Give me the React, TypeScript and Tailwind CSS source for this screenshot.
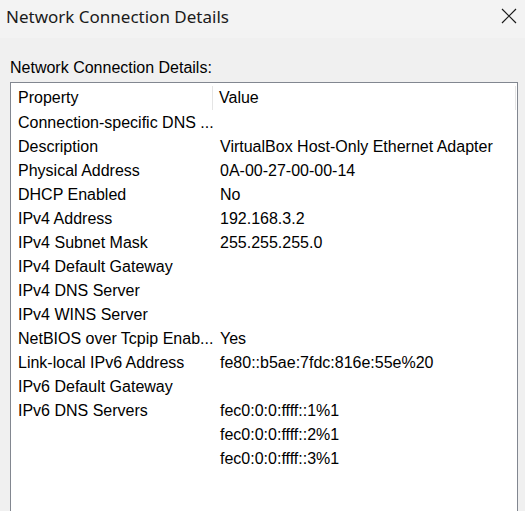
import React from "react";

const rows: [string, string[]][] = [
  ["Connection-specific DNS ...", [""]],
  ["Description", ["VirtualBox Host-Only Ethernet Adapter"]],
  ["Physical Address", ["0A-00-27-00-00-14"]],
  ["DHCP Enabled", ["No"]],
  ["IPv4 Address", ["192.168.3.2"]],
  ["IPv4 Subnet Mask", ["255.255.255.0"]],
  ["IPv4 Default Gateway", [""]],
  ["IPv4 DNS Server", [""]],
  ["IPv4 WINS Server", [""]],
  ["NetBIOS over Tcpip Enab...", ["Yes"]],
  ["Link-local IPv6 Address", ["fe80::b5ae:7fdc:816e:55e%20"]],
  ["IPv6 Default Gateway", [""]],
  ["IPv6 DNS Servers", ["fec0:0:0:ffff::1%1", "fec0:0:0:ffff::2%1", "fec0:0:0:ffff::3%1"]],
];

export default function App() {
  return (
    <div className="w-[525px] h-[511px] overflow-hidden bg-[#f0f0f0] text-black flex flex-col">
      <div className="h-[38px] shrink-0 bg-[#f3f3f3] flex items-center justify-between pl-[6px] pr-[8px]">
        <span className="text-[17px] leading-none font-['Noto_Sans',sans-serif] text-[#1a1a1a] -mt-[5px]">
          Network Connection Details
        </span>
        <svg width="16" height="16" viewBox="0 0 16 16" className="-mt-[6px]">
          <path d="M1 1 L15 15 M15 1 L1 15" stroke="#1a1a1a" strokeWidth="1.2" />
        </svg>
      </div>
      <div className="flex-1 flex flex-col pl-[10px] pr-[7px] font-['Liberation_Sans',Arial,sans-serif] text-[16px]">
        <div className="h-[44px] flex items-end pb-[6px] leading-none">Network Connection Details:</div>
        <div className="flex-1 border border-[#828790] border-b-0 bg-white pt-[3px]">
          <div className="flex h-[25px] items-start">
            <div className="w-[202px] h-[24px] pl-[7px] flex items-center border-r border-[#e5e5e5]">Property</div>
            <div className="w-[303px] h-[24px] pl-[6px] flex items-center border-r border-[#e5e5e5]">Value</div>
          </div>
          {rows.map(([p, vals]) =>
            vals.map((v, i) => (
              <div key={p + i} className="flex h-[24px] items-center">
                <div className="w-[202px] pl-[7px] whitespace-nowrap overflow-hidden">{i === 0 ? p : ""}</div>
                <div className="pl-[7px] whitespace-nowrap">{v}</div>
              </div>
            ))
          )}
        </div>
      </div>
    </div>
  );
}
